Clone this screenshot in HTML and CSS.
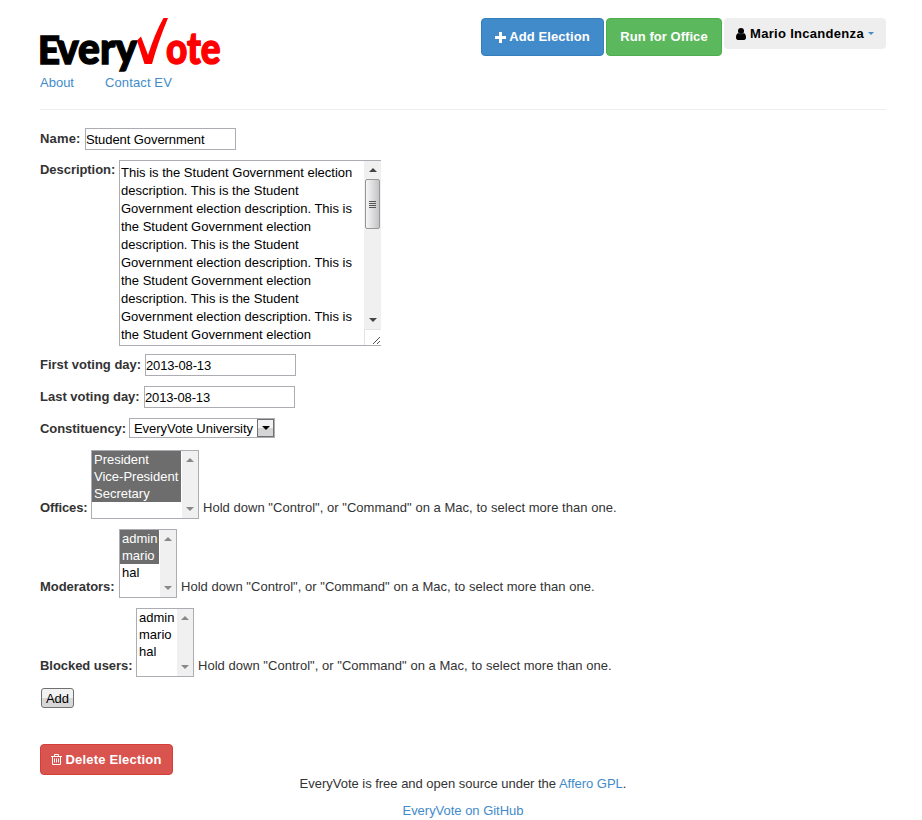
FILE: index.html
```html
<!DOCTYPE html>
<html lang="en">
<head>
<meta charset="utf-8">
<title>EveryVote</title>
<link rel="stylesheet" href="styles.css">
</head>
<body>
<header class="header">
  <div class="brand">
    <svg class="logo" width="182" height="58" viewBox="0 0 182 58" role="img" aria-label="EveryVote">
      <text class="logo-text" x="-2" y="47.500" font-size="37" textLength="22" lengthAdjust="spacingAndGlyphs">E</text>
      <text class="logo-text" x="17" y="47.500" font-size="43.500" textLength="80" lengthAdjust="spacingAndGlyphs">very</text>
      <path class="logo-check" d="M97 24.500 L101 20.500 L108 39 Q115 17 123.500 2 L128 2 Q118 26 112 48 L104.500 48 Z"/>
      <text class="logo-text red" x="126" y="47.500" font-size="43.500" textLength="54.500" lengthAdjust="spacingAndGlyphs">ote</text>
    </svg>
    <nav class="nav"><a href="#">About</a><a class="contact" href="#">Contact EV</a></nav>
  </div>
  <div class="actions">
    <a class="btn primary" href="#"><svg width="11" height="11" viewBox="0 0 11 11"><path d="M4 0h3v4h4v3H7v4H4V7H0V4h4z" fill="#fff"/></svg><span>Add Election</span></a>
    <a class="btn success" href="#"><span>Run for Office</span></a>
    <a class="btn user" href="#"><svg width="10" height="12" viewBox="0 0 10 12"><circle cx="5" cy="3" r="3"/><path d="M2.200 5C.6 5.500 0 7.500 0 9.500 0 11 .8 12 2 12h6c1.200 0 2-1 2-2.500 0-2-.6-4-2.200-4.500C6.500 6.500 3.500 6.500 2.200 5z"/></svg><span>Mario Incandenza</span><i class="caret"></i></a>
  </div>
</header>
<main>
  <div class="row"><label class="w-name">Name:</label><input class="text title" value="Student Government"></div>
  <div class="row"><label class="w-desc">Description:</label>
    <div class="area"><div class="copy">This is the Student Government election
description. This is the Student
Government election description. This is
the Student Government election
description. This is the Student
Government election description. This is
the Student Government election
description. This is the Student
Government election description. This is
the Student Government election</div>
      <div class="side"><div class="scroll"><i class="up"></i><div class="thumb"><i></i><i></i><i></i><i></i></div><i class="down"></i></div>
      <svg class="grip" width="17" height="16" viewBox="0 0 17 16"><path d="M.5 16V0M0 .5h17" stroke="#e3e3e3" fill="none"/><path d="M9 15l7-7M13 15l3-3" stroke="#555" fill="none"/></svg></div>
    </div></div>
  <div class="row"><label class="w-first">First voting day:</label><input class="text" value="2013-08-13"></div>
  <div class="row"><label class="w-last">Last voting day:</label><input class="text" value="2013-08-13"></div>
  <div class="row"><label class="w-cons">Constituency:</label><div class="select"><span>EveryVote University</span><b><i></i></b></div></div>
  <div class="row multi"><label class="w-off">Offices:</label>
    <div class="list wide"><div class="opts"><p class="on">President</p><p class="on">Vice-President</p><p class="on">Secretary</p></div><div class="scroll dim"><i class="up"></i><i class="down"></i></div></div>
    <span class="help">Hold down "Control", or "Command" on a Mac, to select more than one.</span></div>
  <div class="row multi"><label class="w-mod">Moderators:</label>
    <div class="list"><div class="opts"><p class="on">admin</p><p class="on">mario</p><p>hal</p></div><div class="scroll dim"><i class="up"></i><i class="down"></i></div></div>
    <span class="help">Hold down "Control", or "Command" on a Mac, to select more than one.</span></div>
  <div class="row multi"><label class="w-block">Blocked users:</label>
    <div class="list"><div class="opts"><p>admin</p><p>mario</p><p>hal</p></div><div class="scroll dim"><i class="up"></i><i class="down"></i></div></div>
    <span class="help">Hold down "Control", or "Command" on a Mac, to select more than one.</span></div>
  <button class="add">Add</button>
  <a class="btn danger" href="#"><svg width="11" height="11" viewBox="0 0 11 11" fill="none" stroke="#fff"><path d="M0 2.500h11M3.500 2.500v-2h4v2M1.500 2.500v8h8v-8M3.500 4.500v4M5.500 4.500v4M7.500 4.500v4"/></svg><span>Delete Election</span></a>
</main>
<footer class="footer">
  <p>EveryVote is free and open source under the <a href="#">Affero GPL</a>.</p>
  <p class="hub"><a href="#">EveryVote on GitHub</a></p>
</footer>
</body>
</html>
```
FILE: styles.css
```css
* { box-sizing: border-box; }
body { margin: 0; padding: 16px 36px 0 40px; height: 820px; overflow: hidden; background: #fff; color: #333; font: 13px/18px "Liberation Sans", Arial, sans-serif; letter-spacing: 0; }
a { color: #428bca; text-decoration: none; }
p { margin: 0; }
.header { display: flex; justify-content: space-between; align-items: flex-start; height: 94px; border-bottom: 1px solid #eee; }
.brand { display: flex; flex-direction: column; }
.logo { display: block; overflow: visible; }
.logo-text { font-family: Lato, "Open Sans", sans-serif; font-weight: 900; letter-spacing: 0; fill: #000; stroke: #000; stroke-width: 1.4px; }
.logo-text.red, .logo-check { fill: #f00; }
.logo-text.red { stroke: #f00; }
.nav { display: flex; gap: 31px; letter-spacing: 0; }
.contact { letter-spacing: .12px; }
.actions { display: flex; align-items: flex-start; gap: 2px; padding-top: 2px; }
.btn { display: flex; align-items: center; justify-content: center; border: 1px solid; border-radius: 4px; color: #fff; font-weight: bold; white-space: nowrap; }
.primary { width: 123px; height: 38px; background: #428bca; border-color: #357ebd; gap: 3px; letter-spacing: .1px; }
.success { width: 116px; height: 38px; background: #5cb85c; border-color: #4cae4c; letter-spacing: .05px; }
.user { width: 162px; height: 31px; background: #eee; border-color: #eee; color: #000; gap: 4px; letter-spacing: .3px; }
.caret { border: 3px solid transparent; border-top-color: #428bca; border-bottom: 0; }
main { display: flex; flex-direction: column; align-items: flex-start; gap: 10px; padding-top: 18px; }
.row { display: flex; align-items: flex-start; }
label { flex: none; font-weight: bold; padding-top: 2px; white-space: nowrap; letter-spacing: -.05px; }
.w-name { width: 45px; letter-spacing: .15px; }
.w-desc { width: 79px; padding-top: 1px; }
.w-first { width: 105px; letter-spacing: 0; }
.w-last { width: 104px; letter-spacing: 0; }
.w-cons { width: 89px; }
.w-off { width: 51px; letter-spacing: -.1px; }
.w-mod { width: 79px; }
.w-block { width: 96px; }
.text { width: 151px; height: 22px; margin: 0; padding: 1px 0 0; border: 1px solid #abadb3; color: #000; font: inherit; letter-spacing: -.15px; }
.title { letter-spacing: -.08px; }
.area { display: flex; justify-content: space-between; width: 262px; height: 186px; border: 1px solid #abadb3; border-right: 0; margin-bottom: -2px; color: #000; overflow: hidden; }
.copy { padding: 3px 0 0 1px; white-space: pre; }
.side { width: 17px; }
.scroll { display: flex; flex-direction: column; align-items: center; width: 17px; height: 168px; background: #f0f0f0; padding: 7px 0; }
.up, .down { border: 4px solid transparent; }
.up { border-top: 0; border-bottom-color: #444; }
.down { border-bottom: 0; border-top-color: #444; margin-top: auto; }
.thumb { display: flex; flex-direction: column; align-items: center; justify-content: center; gap: 1px; width: 15px; height: 50px; margin-top: 7px; border: 1px solid #979797; border-radius: 2px; background: linear-gradient(90deg, #f5f5f5, #ddd 50%, #c4c4c8); }
.thumb i { width: 7px; height: 1px; background: #555; }
.grip { display: block; }
.select { display: flex; justify-content: space-between; width: 146px; height: 20px; border: 1px solid #abadb3; color: #000; padding-left: 4px; margin-bottom: 2px; white-space: nowrap; }
.select span { padding-top: 1px; letter-spacing: -.05px; }
.select b { display: flex; align-items: center; justify-content: center; width: 17px; height: 18px; border: 1px solid #707070; background: linear-gradient(#f2f2f2 50%, #d5d5d5 50%); }
.select i { border: 4px solid transparent; border-top-color: #000; border-bottom: 0; }
.multi label, .help { padding-top: 49px; }
.help { margin-left: 4px; white-space: nowrap; letter-spacing: .03px; }
.list { display: flex; width: 58px; height: 69px; border: 1px solid #abadb3; background: #fff; color: #000; }
.wide { width: 108px; }
.opts { flex: 1; line-height: 17px; white-space: nowrap; }
.opts p { height: 17px; padding-left: 2px; margin-right: 1px; }
.opts .on { background: #6d6d6d; color: #fff; }
.list .scroll { width: 16px; height: 67px; }
.dim .up { border-bottom-color: #888; }
.dim .down { border-top-color: #888; }
.add { width: 33px; height: 20px; margin: 1px 0 26px 1px; padding: 1px 0 0; border: 1px solid #707070; border-radius: 3px; background: linear-gradient(#f2f2f2 50%, #d8d8d8 50%); color: #000; font: inherit; letter-spacing: inherit; }
.danger { width: 133px; height: 31px; background: #d9534f; border-color: #d43f3a; gap: 3px; letter-spacing: .2px; }
.footer { text-align: center; letter-spacing: -.02px; }
.hub { margin-top: 9px; }
```
